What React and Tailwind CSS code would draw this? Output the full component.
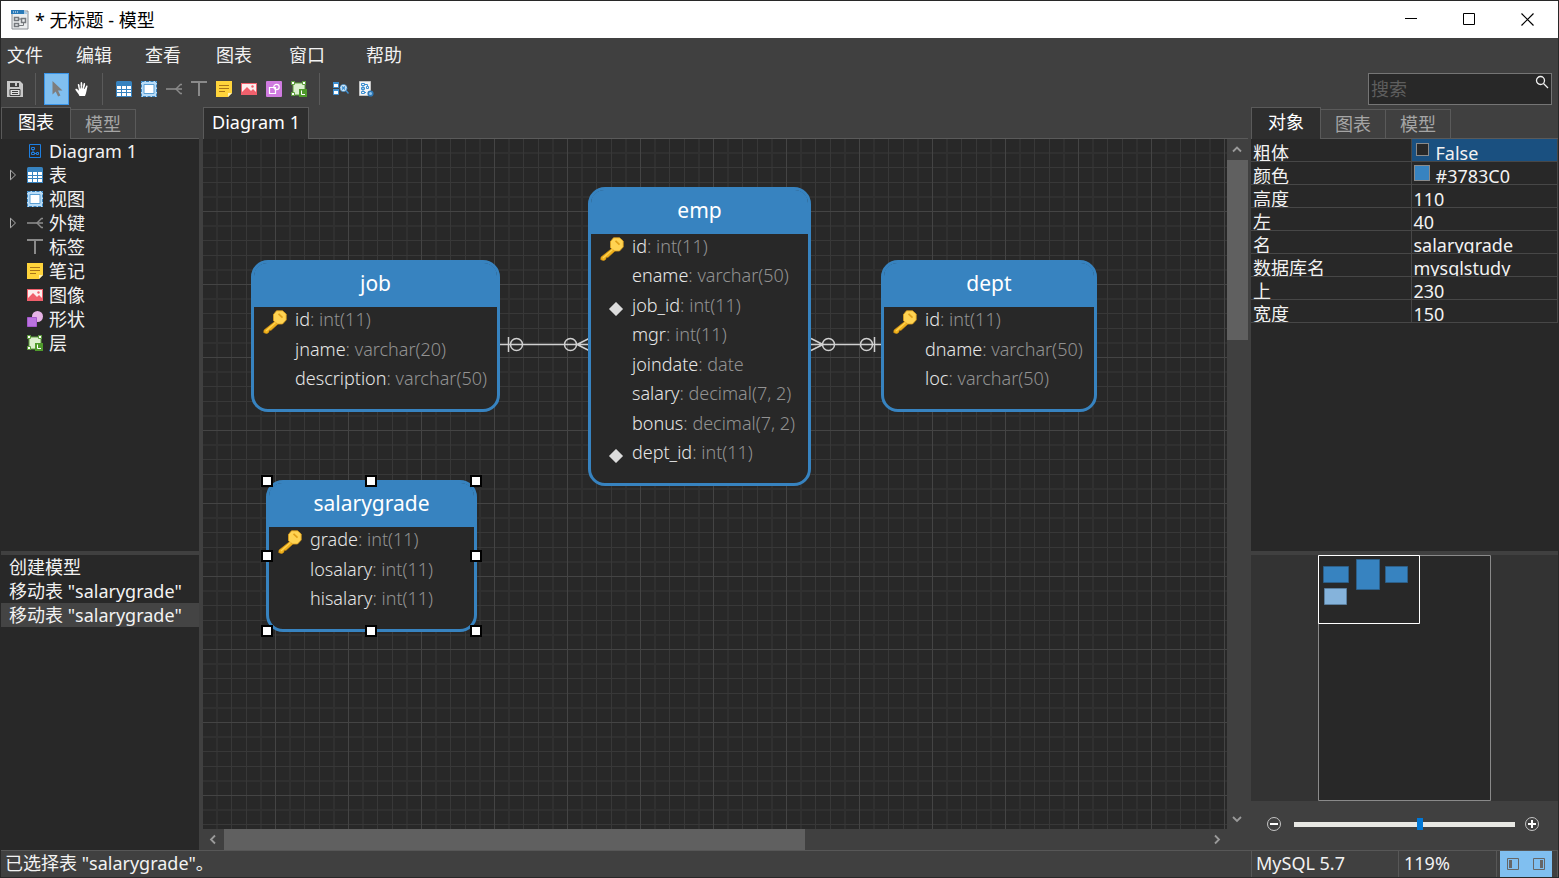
import { useState } from 'react'
import clsx from 'clsx'

const MENUS = ['文件', '编辑', '查看', '图表', '窗口', '帮助']

const TABLES = [
    {
        name: 'job', place: 'left-[48px] top-[121px] w-[249px] h-[152px]',
        columns: [
            { name: 'id', type: 'int(11)', mark: 'key' },
            { name: 'jname', type: 'varchar(20)' },
            { name: 'description', type: 'varchar(50)' },
        ],
    },
    {
        name: 'emp', place: 'left-[385px] top-[48px] w-[223px] h-[299px]',
        columns: [
            { name: 'id', type: 'int(11)', mark: 'key' },
            { name: 'ename', type: 'varchar(50)' },
            { name: 'job_id', type: 'int(11)', mark: 'fk' },
            { name: 'mgr', type: 'int(11)' },
            { name: 'joindate', type: 'date' },
            { name: 'salary', type: 'decimal(7, 2)' },
            { name: 'bonus', type: 'decimal(7, 2)' },
            { name: 'dept_id', type: 'int(11)', mark: 'fk' },
        ],
    },
    {
        name: 'dept', place: 'left-[678px] top-[121px] w-[216px] h-[152px]',
        columns: [
            { name: 'id', type: 'int(11)', mark: 'key' },
            { name: 'dname', type: 'varchar(50)' },
            { name: 'loc', type: 'varchar(50)' },
        ],
    },
    {
        name: 'salarygrade', place: 'left-[63px] top-[341px] w-[211px] h-[152px]', selected: true,
        columns: [
            { name: 'grade', type: 'int(11)', mark: 'key' },
            { name: 'losalary', type: 'int(11)' },
            { name: 'hisalary', type: 'int(11)' },
        ],
    },
]

const PROPS = [
    ['粗体', 'False'],
    ['颜色', '#3783C0'],
    ['高度', '110'],
    ['左', '40'],
    ['名', 'salarygrade'],
    ['数据库名', 'mysqlstudy'],
    ['上', '230'],
    ['宽度', '150'],
]

const HANDLES = [
    '-left-2 -top-2', 'left-24 -top-2', '-right-2 -top-2',
    '-left-2 top-[67px]', '-right-2 top-[67px]',
    '-left-2 -bottom-2', 'left-24 -bottom-2', '-right-2 -bottom-2',
]

function Icon({ children, size = 16 }) {
    return <svg width={size} height={size} viewBox={`0 0 ${size} ${size}`} fill="none" className="shrink-0" aria-hidden="true">{children}</svg>
}

function AppIcon() {
    return (
        <svg width="18" height="20" viewBox="0 0 18 20" fill="none" aria-hidden="true">
            <path d="M1 1h16v18H1z" fill="#eceeef" stroke="#8a8f94" />
            <path d="M0 0h13v4H0z" fill="#2a7ab8" />
            <path d="M13 0l4.500 4H13z" fill="#a9c9e2" />
            <path d="M2 2h1M4 2h1M6 2h1" stroke="#fff" />
            <path d="M3.500 7.500h4v3h-4zM3.500 13.500h4v3h-4zM10.500 8.500h4v4h-4z" stroke="#75797d" strokeWidth="1.500" />
            <path d="M8 9h2M8 15.500h4.500V13" stroke="#75797d" />
        </svg>
    )
}

function SaveIcon() {
    return (
        <Icon>
            <path d="M0 0h13l3 3v13H0z" fill="#c8c8c8" />
            <path d="M3 2h9v4H3z" fill="#404040" />
            <path d="M8 2h2v3H8z" fill="#c8c8c8" />
            <path d="M3 8.500h10v6H3z" fill="#dedede" stroke="#404040" />
            <path d="M5 10.500h6M5 12.500h6" stroke="#404040" />
        </Icon>
    )
}

function CursorIcon() {
    return <Icon><path d="M3.500 0v13.500l3.200-3 2.400 5 2.300-1.100-2.400-4.900h4.500z" fill="#7d7d7d" /></Icon>
}

function HandIcon() {
    return (
        <Icon>
            <path d="M5.500 15C4.500 12.500 2.500 10.500 1.500 9c-.5-1 .8-1.600 1.600-.9L5 9.700 3.800 4c-.2-1.200 1.200-1.400 1.500-.4L6.500 7.500 6.600 2c0-1.200 1.500-1.200 1.600 0L8.500 7.300 9.600 2.600c.3-1.100 1.600-.8 1.500.3L10.600 8l1.500-3c.5-.9 1.700-.5 1.400.6-.7 2.500-1 6.500-2.500 9.400z" fill="#fff" />
            <path d="M6.300 7.500L6 5M8.400 7.300V5M10.400 8l.3-2.500" stroke="#404040" strokeWidth=".6" />
        </Icon>
    )
}

function TableIcon() {
    return (
        <Icon>
            <path d="M0 1.500Q0 0 1.500 0h13Q16 0 16 1.500V16H0z" fill="#3783c0" />
            <path d="M1 5h4v3H1zM6 5h4v3H6zM11 5h4v3h-4zM1 9h4v2H1zM6 9h4v2H6zM11 9h4v2h-4zM1 12h4v3H1zM6 12h4v3H6zM11 12h4v3h-4z" fill="#fff" />
        </Icon>
    )
}

function ViewIcon() {
    return (
        <Icon>
            <path d="M0 0h16v16H0z" fill="#b9dcf7" />
            <path d="M.5.5h15v15H.5z" stroke="#3783c0" strokeDasharray="3 1.500" />
            <path d="M3 3.500h10v9H3z" fill="#fff" stroke="#5a9fd4" />
        </Icon>
    )
}

function ForeignKeyIcon() {
    return (
        <Icon>
            <path d="M0 8h16" stroke="#8a8a8a" strokeWidth="1.600" />
            <path d="M16 3.500h-1.500L10 8l4.500 4.500H16" stroke="#8a8a8a" strokeWidth="1.400" />
        </Icon>
    )
}

function LabelIcon() {
    return <Icon><path d="M0 1h16M8 1v14" stroke="#8a8a8a" strokeWidth="2" /></Icon>
}

function NoteIcon() {
    return (
        <Icon>
            <path d="M0 0h16v12l-4 4H0z" fill="#ffd43b" />
            <path d="M12 12h4l-4 4z" fill="#fff3b8" />
            <path d="M3 4.500h10M3 7.500h10M3 10.500h6" stroke="#a8741a" />
        </Icon>
    )
}

function ImageIcon() {
    return (
        <Icon>
            <path d="M0 2h16v12H0z" fill="#f0606c" />
            <path d="M1 3h14v8l-3-3-2 2-4-4-5 5z" fill="#fdeeee" />
            <path d="M1 12l5-5 4 4 2-2 3 3v1H1z" fill="#f0606c" />
            <circle cx="11.500" cy="5.500" r="1.200" fill="#f0606c" />
        </Icon>
    )
}

function ShapeToolIcon() {
    return (
        <Icon>
            <rect width="16" height="16" rx="1" fill="#d07be0" />
            <path d="M3.500 6.500h6v6h-6z" stroke="#fff" strokeWidth="1.200" />
            <circle cx="10.500" cy="6" r="2.700" stroke="#fff" strokeWidth="1.200" />
        </Icon>
    )
}

function ShapeIcon() {
    return (
        <Icon>
            <circle cx="10.500" cy="5.500" r="5.500" fill="#e6b3e6" />
            <path d="M.5 6.500h9v9h-9z" fill="#bb72e0" stroke="#a558cc" />
        </Icon>
    )
}

function LayerIcon() {
    return (
        <Icon>
            <path d="M2 2h12v12H2z" fill="#dcefcf" stroke="#5c9e3a" />
            <path d="M.5.5h3v3h-3zM11.500.5h3v3h-3zM.5 11.500h3v3h-3z" fill="#fff" stroke="#5c9e3a" />
            <path d="M8 8h8v8H8z" fill="#4f9a2c" />
            <path d="M10.500 9.500v4h3.500" stroke="#fff" />
        </Icon>
    )
}

function AutoLayoutIcon() {
    return (
        <Icon>
            <path d="M.5 2.500h5v4h-5zM.5 9.500h5v4h-5z" fill="#fff" stroke="#3d8fd1" />
            <path d="M0 1h6v2H0zM0 8h6v2H0z" fill="#3d8fd1" />
            <circle cx="10.500" cy="7" r="3.500" fill="#cfe6f8" stroke="#3d8fd1" strokeDasharray="2 1" />
            <path d="M9 5.500l3 3M12 5.500l-3 3M13 9.500l2.500 3" stroke="#3d8fd1" strokeWidth="1.400" />
        </Icon>
    )
}

function ModelViewIcon() {
    return (
        <Icon>
            <path d="M1.500.5h11v14h-11z" fill="#f4f4f4" stroke="#c4c4c4" />
            <path d="M3.500 2.500h3v2h-3zM3.500 6.500h3v2h-3zM8.500 5.500h2v2h-2zM3.500 10.500h3v2h-3zM7 3.500h2.500v2M5 4.500v6M7 11.500h1" stroke="#3d8fd1" />
            <circle cx="12.500" cy="12.500" r="2.300" fill="#8ec3ee" stroke="#2f7ab8" strokeWidth="1.600" />
        </Icon>
    )
}

function DiagramIcon() {
    return (
        <Icon>
            <path d="M2.500 1.500h11v13h-11z" stroke="#1e7fe0" />
            <path d="M4.500 4.500h3v2h-3zM4.500 9.500h3v2h-3zM9.500 9.500h2v2h-2zM6 6.500v3M7.500 10.500h2" stroke="#1e7fe0" />
        </Icon>
    )
}

function KeyIcon() {
    return (
        <Icon size={24}>
            <path d="M13 10.500L1 20l-.3 2.600 3 1.200 2.200-1.600.2-1.600 2-.3 6.400-5.800z" fill="#efb11c" stroke="#c98a12" strokeWidth=".6" />
            <path d="M13.500.8h6L23.200 4v6l-3.700 4h-5L10.500 10.800V4.500z" fill="#ffd352" stroke="#e0a01a" strokeWidth=".8" />
            <path d="M15.500 3.800l4 3.800" stroke="#e0a01a" strokeWidth="1.600" />
            <path d="M12.500 12.500L3 21" stroke="#ffd352" strokeWidth="1.200" />
        </Icon>
    )
}

function ForeignMark() {
    return <Icon><path d="M8 1l7 7-7 7-7-7z" fill="#dcdcdc" stroke="#8d8d8d" /></Icon>
}

const TOOLS = [
    ['新建表', TableIcon], ['新建视图', ViewIcon], ['新建外键', ForeignKeyIcon], ['新建标签', LabelIcon],
    ['新建笔记', NoteIcon], ['新建图像', ImageIcon], ['新建形状', ShapeToolIcon], ['新建层', LayerIcon],
]

const TREE = [
    { label: 'Diagram 1', icon: DiagramIcon },
    { label: '表', icon: TableIcon, open: true },
    { label: '视图', icon: ViewIcon },
    { label: '外键', icon: ForeignKeyIcon, open: true },
    { label: '标签', icon: LabelIcon },
    { label: '笔记', icon: NoteIcon },
    { label: '图像', icon: ImageIcon },
    { label: '形状', icon: ShapeIcon },
    { label: '层', icon: LayerIcon },
]

function Chevron({ d, className }) {
    return (
        <button aria-label="滚动" className={clsx('flex items-center justify-center shrink-0', className)}>
            <svg width="11" height="11" viewBox="0 0 11 11" fill="none"><path d={d} stroke="#9a9a9a" strokeWidth="1.800" /></svg>
        </button>
    )
}

function ToolButton({ label, active, children }) {
    return (
        <button aria-label={label} className={clsx('w-[25px] h-8 flex items-center justify-center', active && 'bg-[#80bff0] border border-[#3b96ea]')}>
            {children}
        </button>
    )
}

function Divider() {
    return <div className="w-[17px] h-8 flex justify-center"><div className="w-px bg-[#5a5a5a]" /></div>
}

function Tabs({ items, pad }) {
    return (
        <div className="flex items-end h-8 shrink-0">
            {items.map((t, i) => (
                <button key={t} className={clsx('border-t border-r border-[#5a5a5a]',
                    i === 0 ? 'h-8 pb-1 border-l bg-[#2e2e2e] text-white' : 'h-[30px] px-[14px] border-b text-[#a5a5a5]', i === 0 && pad)}>
                    {t}
                </button>
            ))}
            <div className="flex-1 border-b border-[#5a5a5a]" />
        </div>
    )
}

function TableNode({ table }) {
    return (
        <div className={clsx('absolute flex flex-col rounded-[17px] border-[3px] border-[#3783c0] bg-[#282828]', table.place)}>
            <div className="h-11 shrink-0 rounded-t-[13px] bg-[#3783c0] text-white text-[21px] leading-10 text-center">{table.name}</div>
            <ul className="flex-1 flex flex-col justify-between pb-4 text-[18px]">
                {table.columns.map(c => (
                    <li key={c.name} className="flex h-[27px] leading-6 whitespace-nowrap">
                        <span className={clsx('w-[41px] shrink-0', c.mark === 'key' ? 'pl-[9px] pt-[3px]' : 'pl-[17px] pt-2')}>
                            {c.mark === 'key' && <KeyIcon />}
                            {c.mark === 'fk' && <ForeignMark />}
                        </span>
                        <span className="font-light text-[#e6e6e6]">{c.name}<span className="text-[#929292]">: {c.type}</span></span>
                    </li>
                ))}
            </ul>
            {table.selected && HANDLES.map(h => (
                <span key={h} className={clsx('absolute w-3 h-3 bg-white border-2 border-black', h)} />
            ))}
        </div>
    )
}

function Canvas() {
    return (
        <div className="relative flex-1 overflow-hidden bg-[#282828]">
            <svg className="absolute inset-0 w-full h-full" fill="none" aria-hidden="true">
                <defs>
                    <pattern id="grid" x="-1" y="-1" width="73" height="73" patternUnits="userSpaceOnUse">
                        <path d="M14 0h2v73h-2zM58 0h2v73h-2zM0 14h73v2H0zM0 58h73v2H0z" fill="#303030" />
                        <path d="M29 0h1v73h-1zM44 0h1v73h-1zM0 29h73v1H0zM0 44h73v1H0z" fill="#383838" />
                        <path d="M0 0h1v73H0zM0 0h73v1H0z" fill="#444" />
                    </pattern>
                </defs>
                <rect width="100%" height="100%" fill="url(#grid)" />
                <g stroke="#d0d0d0" strokeWidth="1.500">
                    {/* job - emp */}
                    <path d="M297 205.500h88M305.500 198v15M374 205.500l12-6M374 205.500l12 6" />
                    <circle cx="313.500" cy="205.500" r="6" />
                    <circle cx="367.500" cy="205.500" r="6" />
                    {/* emp - dept */}
                    <path d="M608 205.500h70M671.500 198v15M620 205.500l-12-6M620 205.500l-12 6" />
                    <circle cx="625.500" cy="205.500" r="6" />
                    <circle cx="663.500" cy="205.500" r="6" />
                </g>
            </svg>
            {TABLES.map(t => <TableNode key={t.name} table={t} />)}
        </div>
    )
}

function LeftPanel() {
    return (
        <aside className="w-[198px] flex flex-col">
            <Tabs items={['图表', '模型']} pad="px-4" />
            <ul className="h-[412px] bg-[#282828]">
                {TREE.map(({ label, icon: TreeIcon, open }) => (
                    <li key={label} className="flex items-center h-6 pl-2">
                        <span className="w-[18px]">
                            {open && <svg width="8" height="12" viewBox="0 0 8 12" fill="none"><path d="M1.500 1.200v9.600L6.500 6z" stroke="#b0b0b0" /></svg>}
                        </span>
                        <TreeIcon />
                        <span className="ml-1.5">{label}</span>
                    </li>
                ))}
            </ul>
            <ul className="flex-1 mt-1 bg-[#282828] leading-6">
                <li className="pl-2">创建模型</li>
                <li className="pl-2">移动表 "salarygrade"</li>
                <li className="pl-2 bg-[#444]">移动表 "salarygrade"</li>
            </ul>
        </aside>
    )
}

function CenterPanel() {
    return (
        <main className="flex-1 min-w-0 flex flex-col ml-1 mr-[3px]">
            <Tabs items={['Diagram 1']} pad="px-2" />
            <div className="flex-1 flex">
                <Canvas />
                <div className="w-[21px] flex flex-col">
                    <Chevron className="h-[21px]" d="M1 7.500l4-4 4 4" />
                    <div className="h-[180px] bg-[#606060]" />
                    <div className="flex-1" />
                    <Chevron className="h-[21px]" d="M1 4l4 4 4-4" />
                </div>
            </div>
            <div className="flex h-[21px] pr-[21px]">
                <Chevron className="w-[21px]" d="M7 1.500l-4 4 4 4" />
                <div className="w-[581px] bg-[#606060]" />
                <div className="flex-1" />
                <Chevron className="w-[21px]" d="M4 1.500l4 4-4 4" />
            </div>
        </main>
    )
}

function RightPanel() {
    const [bold, setBold] = useState(false)
    const [zoom, setZoom] = useState(57)

    return (
        <aside className="w-[307px] flex flex-col">
            <Tabs items={['对象', '图表', '模型']} pad="px-4" />
            <div className="h-[412px] bg-[#282828]">
                <table className="w-full table-fixed border-collapse">
                    <tbody>
                        {PROPS.map(([name, value], i) => (
                            <tr key={name} className="border-b border-[#474747]">
                                <th scope="row" className="w-[160px] p-0 text-left font-normal">
                                    <div className="h-[22px] leading-[28px] pl-0.5 overflow-hidden">{name}</div>
                                </th>
                                <td className={clsx('p-0 border-x border-[#474747]', i === 0 && 'bg-[#1a5080]')}>
                                    <div className="flex h-[22px] leading-[28px] pl-0.5 overflow-hidden">
                                        {i === 0 && (
                                            <input type="checkbox" aria-label="粗体" checked={bold} onChange={e => setBold(e.target.checked)}
                                                className="appearance-none w-[13px] h-[13px] mt-1 ml-0.5 mr-[7px] bg-[#282828] border border-[#8a8a8a]" />
                                        )}
                                        {i === 1 && <span className="w-4 h-4 mt-[3px] mr-1.5 bg-[#3783c0] border border-[#8a8a8a]" />}
                                        {value}
                                    </div>
                                </td>
                            </tr>
                        ))}
                    </tbody>
                </table>
            </div>
            <div className="flex-1 mt-1 bg-[#333] flex justify-center">
                <svg className="w-[173px] h-[246px]" viewBox="0 0 173 246" fill="none" aria-hidden="true">
                    <path d="M.5.5h172v245H.5z" fill="#282828" stroke="#8a8a8a" />
                    <path d="M5.500 11.500h25v16h-25zM38.500 4.500h23v30h-23zM67.500 11.500h22v16h-22z" fill="#3783c0" stroke="#2d5f88" />
                    <path d="M6.500 33.500h22v16h-22z" fill="#85b3db" stroke="#5b7f9e" />
                    <path d="M.5.5h101v68H.5z" stroke="#fff" />
                </svg>
            </div>
            <div className="h-[49px] flex items-center pb-[3px] pl-[15px] pr-[18px]">
                <button aria-label="缩小">
                    <Icon><circle cx="8" cy="8" r="6.500" stroke="#c4c4c4" /><path d="M4 8h8" stroke="#fff" strokeWidth="2" /></Icon>
                </button>
                <input type="range" aria-label="缩放" min="0" max="100" value={zoom} onChange={e => setZoom(Number(e.target.value))}
                    className="appearance-none flex-1 min-w-0 ml-3 mr-[9px] h-[5px] bg-[#e8e8e4] [&::-webkit-slider-thumb]:appearance-none [&::-webkit-slider-thumb]:w-1.5 [&::-webkit-slider-thumb]:h-3 [&::-webkit-slider-thumb]:bg-[#0078d7]" />
                <button aria-label="放大">
                    <Icon><circle cx="8" cy="8" r="6.500" stroke="#c4c4c4" /><path d="M4 8h8M8 4v8" stroke="#fff" strokeWidth="2" /></Icon>
                </button>
            </div>
        </aside>
    )
}

export default function App() {
    return (
        <div className="h-screen flex flex-col overflow-hidden border border-[#282828] bg-[#404040] text-[18px] leading-6 text-[#f2f2f2] font-['Noto_Sans','Noto_Sans_CJK_SC',sans-serif]">
            {/* Title bar */}
            <header className="h-[37px] shrink-0 flex items-center bg-white text-black pl-[10px] pr-0.5">
                <AppIcon />
                <h1 className="ml-1.5 flex-1">* 无标题 - 模型</h1>
                <button aria-label="最小化" className="w-[58px] h-full flex items-center justify-center">
                    <svg width="13" height="13" fill="none" stroke="#000"><path d="M0 5.500h12" /></svg>
                </button>
                <button aria-label="最大化" className="w-[58px] h-full flex items-center justify-center">
                    <svg width="13" height="13" fill="none" stroke="#000"><path d="M.5.5h11v11H.5z" /></svg>
                </button>
                <button aria-label="关闭" className="w-[58px] h-full flex items-center justify-center">
                    <svg width="13" height="13" fill="none" stroke="#000" strokeWidth="1.200"><path d="M.5.5l12 12M12.500.5l-12 12" /></svg>
                </button>
            </header>

            <nav className="h-[35px] shrink-0 grid grid-cols-[69px_69px_71px_73px_77px_auto] items-center pl-1.5 pb-0.5">
                {MENUS.map(m => <button key={m} className="text-left">{m}</button>)}
            </nav>

            {/* Toolbar */}
            <div className="flex shrink-0 mb-0.5 pl-px pr-1.5">
                <ToolButton label="保存"><SaveIcon /></ToolButton>
                <Divider />
                <ToolButton label="选择" active><CursorIcon /></ToolButton>
                <ToolButton label="移动图表"><HandIcon /></ToolButton>
                <Divider />
                {TOOLS.map(([label, ToolIcon]) => <ToolButton key={label} label={label}><ToolIcon /></ToolButton>)}
                <Divider />
                <ToolButton label="自动布局"><AutoLayoutIcon /></ToolButton>
                <ToolButton label="模型转换"><ModelViewIcon /></ToolButton>
                <div className="relative ml-auto w-[184px] h-8">
                    <input type="text" aria-label="搜索" placeholder="搜索"
                        className="w-full h-full px-0.5 pr-6 bg-[#282828] border border-[#757575] placeholder:text-[#5e5e5e] outline-none" />
                    <svg className="absolute right-[3px] top-0.5" width="14" height="14" viewBox="0 0 14 14" fill="none" stroke="#f0f0f0" strokeWidth="1.300">
                        <circle cx="5.500" cy="5.500" r="4" /><path d="M8.500 8.500l4.500 4.500" />
                    </svg>
                </div>
            </div>

            <div className="flex-1 min-h-0 flex">
                <LeftPanel />
                <CenterPanel />
                <RightPanel />
            </div>

            {/* Status bar */}
            <footer className="h-[27px] shrink-0 flex border-t border-[#575757]">
                <div className="flex-1 pl-1">已选择表 "salarygrade"。</div>
                <div className="w-[147px] pl-1 border-l border-[#575757]">MySQL 5.7</div>
                <div className="w-[98px] pl-[5px] border-l border-[#575757]">119%</div>
                <div className="w-[62px] pl-[3px] border-x border-[#575757] flex">
                    <button aria-label="左侧窗格" className="w-[26px] bg-[#80bff0] flex items-center justify-center">
                        <svg width="12" height="12" fill="none"><path d="M.5.5h11v11H.5z" stroke="#666" /><path d="M2 2h3v8H2z" fill="#666" /></svg>
                    </button>
                    <button aria-label="右侧窗格" className="w-[26px] bg-[#80bff0] flex items-center justify-center">
                        <svg width="12" height="12" fill="none"><path d="M.5.5h11v11H.5z" stroke="#666" /><path d="M7 2h3v8H7z" fill="#666" /></svg>
                    </button>
                </div>
            </footer>
        </div>
    )
}
